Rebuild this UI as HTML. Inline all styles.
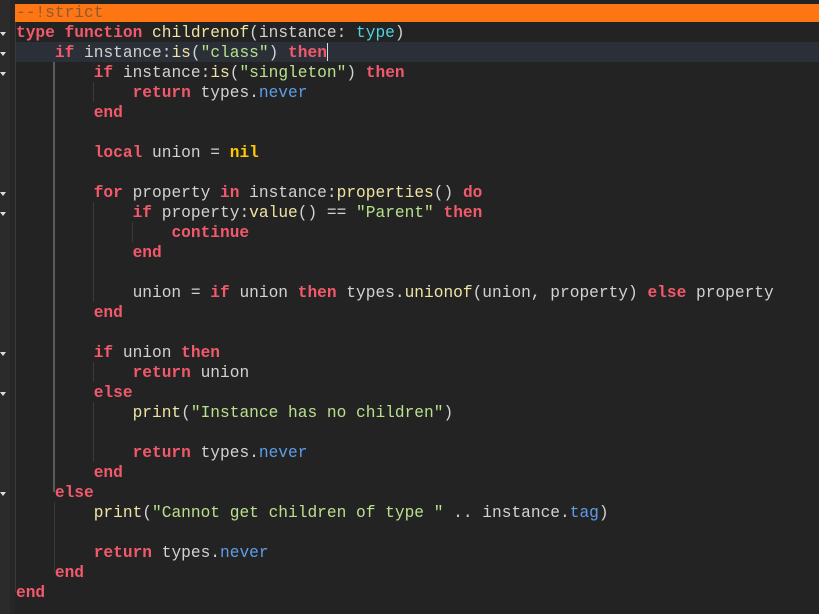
<!DOCTYPE html>
<html><head><meta charset="utf-8"><style>
html,body{margin:0;padding:0;}
body{width:819px;height:614px;background:#232323;position:relative;overflow:hidden;font-family:"Liberation Mono","DejaVu Sans Mono",monospace;}
.gut{position:absolute;left:0;top:0;width:10px;height:614px;background:#2b2b2b;}
.g2{position:absolute;left:10px;top:0;width:5px;height:614px;background:#262626;}
.vg{position:absolute;width:1px;background:#3a3a3a;}
.vg.a{background:#5a5a5a;width:2px;}
.band{position:absolute;left:15px;top:4px;width:804px;height:18px;background:#fd7613;}
.cur{position:absolute;left:15px;top:42px;width:804px;height:20px;background:#2b3038;}
.caret{position:absolute;left:327px;top:43px;width:1px;height:18px;background:#ddd;}
.l{position:absolute;left:16px;height:20px;line-height:20px;font-size:16.2px;white-space:pre;color:#d2d2d2;margin-top:1px;}
.k{color:#f2596b;font-weight:bold;}
.f{color:#efe4a4;}
.s{color:#b9e08c;}
.t{color:#4fd3dc;}
.b{color:#5e9de6;}
.n{color:#ffc800;font-weight:bold;}
.c{color:#8d5a34;}
.fold{position:absolute;left:0;width:0;height:0;border-left:3px solid transparent;border-right:3px solid transparent;border-top:4px solid #ddd;}
</style></head><body>
<div class="gut"></div><div class="g2"></div>
<div class="band"></div>
<div class="cur"></div>
<div class="vg" style="left:15px;top:22px;height:570px"></div>
<div class="vg a" style="left:53px;top:62px;height:430px"></div>
<div class="vg" style="left:54px;top:502px;height:70px"></div>
<div class="vg" style="left:93px;top:82px;height:20px"></div>
<div class="vg" style="left:93px;top:202px;height:100px"></div>
<div class="vg" style="left:132px;top:222px;height:20px"></div>
<div class="vg" style="left:93px;top:362px;height:20px"></div>
<div class="vg" style="left:93px;top:402px;height:60px"></div>
<div class="fold" style="top:32px"></div>
<div class="fold" style="top:52px"></div>
<div class="fold" style="top:72px"></div>
<div class="fold" style="top:192px"></div>
<div class="fold" style="top:212px"></div>
<div class="fold" style="top:352px"></div>
<div class="fold" style="top:392px"></div>
<div class="fold" style="top:492px"></div>
<div class="l" style="top:2px"><span class="c">--!strict</span></div>
<div class="l" style="top:22px"><span class="k">type function</span> <span class="f">childrenof</span>(instance: <span class="t">type</span>)</div>
<div class="l" style="top:42px">    <span class="k">if</span> instance:<span class="f">is</span>(<span class="s">"class"</span>) <span class="k">then</span></div>
<div class="caret"></div>
<div class="l" style="top:62px">        <span class="k">if</span> instance:<span class="f">is</span>(<span class="s">"singleton"</span>) <span class="k">then</span></div>
<div class="l" style="top:82px">            <span class="k">return</span> types.<span class="b">never</span></div>
<div class="l" style="top:102px">        <span class="k">end</span></div>
<div class="l" style="top:142px">        <span class="k">local</span> union = <span class="n">nil</span></div>
<div class="l" style="top:182px">        <span class="k">for</span> property <span class="k">in</span> instance:<span class="f">properties</span>() <span class="k">do</span></div>
<div class="l" style="top:202px">            <span class="k">if</span> property:<span class="f">value</span>() == <span class="s">"Parent"</span> <span class="k">then</span></div>
<div class="l" style="top:222px">                <span class="k">continue</span></div>
<div class="l" style="top:242px">            <span class="k">end</span></div>
<div class="l" style="top:282px">            union = <span class="k">if</span> union <span class="k">then</span> types.<span class="f">unionof</span>(union, property) <span class="k">else</span> property</div>
<div class="l" style="top:302px">        <span class="k">end</span></div>
<div class="l" style="top:342px">        <span class="k">if</span> union <span class="k">then</span></div>
<div class="l" style="top:362px">            <span class="k">return</span> union</div>
<div class="l" style="top:382px">        <span class="k">else</span></div>
<div class="l" style="top:402px">            <span class="f">print</span>(<span class="s">"Instance has no children"</span>)</div>
<div class="l" style="top:442px">            <span class="k">return</span> types.<span class="b">never</span></div>
<div class="l" style="top:462px">        <span class="k">end</span></div>
<div class="l" style="top:482px">    <span class="k">else</span></div>
<div class="l" style="top:502px">        <span class="f">print</span>(<span class="s">"Cannot get children of type "</span> .. instance.<span class="b">tag</span>)</div>
<div class="l" style="top:542px">        <span class="k">return</span> types.<span class="b">never</span></div>
<div class="l" style="top:562px">    <span class="k">end</span></div>
<div class="l" style="top:582px"><span class="k">end</span></div>
</body></html>
